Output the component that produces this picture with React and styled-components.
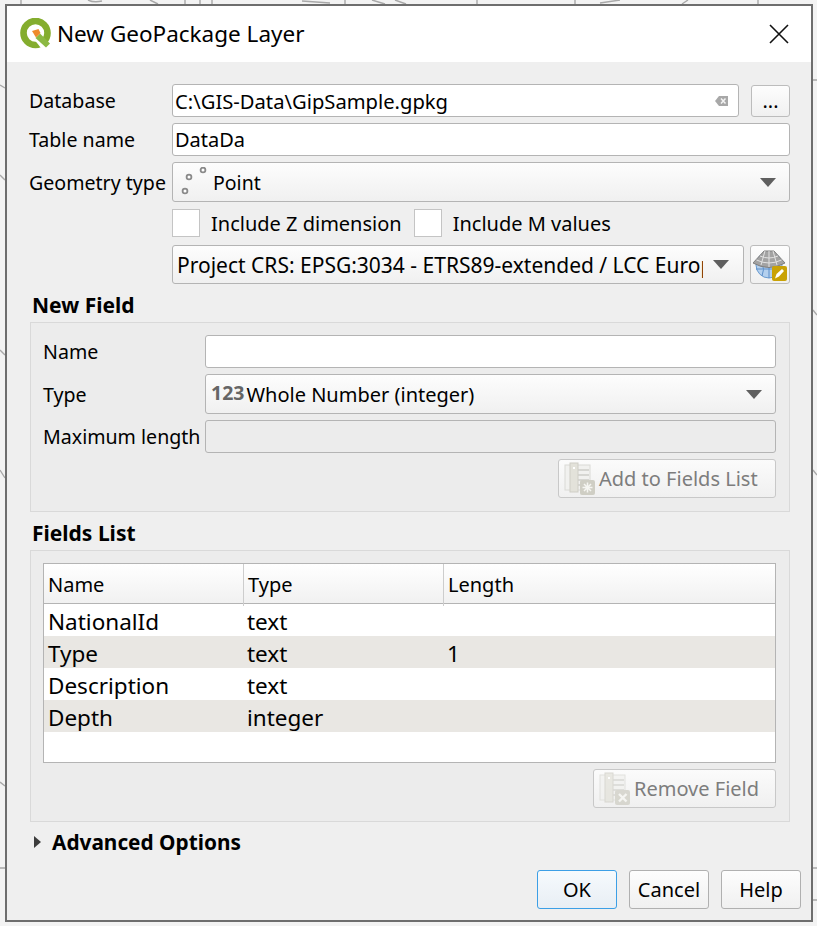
import React from "react";
import styled, { createGlobalStyle } from "styled-components";

const GlobalStyle = createGlobalStyle`
  html, body {
    margin: 0;
    padding: 0;
    background: #f3f3f3;
  }
  body {
    font-family: "Noto Sans", "DejaVu Sans", sans-serif;
    font-size: 20px;
    color: #000;
  }
`;

const Page = styled.div`
  position: relative;
  width: 817px;
  height: 926px;
  overflow: hidden;
  padding: 4px 0 0 5px;
  box-sizing: border-box;
`;

const MapLines = styled.svg`
  position: absolute;
  inset: 0;
`;

const Dialog = styled.div`
  position: relative;
  width: 808px;
  height: 918px;
  box-sizing: border-box;
  border: 2px solid #6e6e6e;
  background: #efefef;
  display: flex;
  flex-direction: column;
`;

const TitleBar = styled.div`
  height: 56px;
  background: #fff;
  display: flex;
  align-items: center;
  padding: 0 21px 0 13px;
  flex-shrink: 0;
`;

const TitleText = styled.div`
  flex: 1;
  margin-left: 5px;
  font-size: 22.5px;
  line-height: 56px;
`;

const Body = styled.div`
  padding: 22px 21px 0 22px;
  display: flex;
  flex-direction: column;
`;

const Row = styled.div`
  display: flex;
  align-items: center;
  margin-top: ${(p) => p.$top || 0}px;
`;

const Label = styled.div`
  width: ${(p) => p.$width || 143}px;
  flex-shrink: 0;
  white-space: nowrap;
  font-size: 19.6px;
`;

const Field = styled.div`
  flex: 1;
  height: ${(p) => p.$height || 33}px;
  box-sizing: border-box;
  border: 1px solid #b4b4b4;
  border-radius: 3px;
  background: ${(p) => (p.$disabled ? "#ececec" : "#fff")};
  display: flex;
  align-items: center;
  padding: 0 2px;
  min-width: 0;
`;

const FieldText = styled.div`
  flex: 1;
  white-space: nowrap;
  overflow: hidden;
  font-size: ${(p) => p.$size || 20}px;
`;

const ComboText = styled(FieldText)`
  margin-left: ${(p) => p.$left || 0}px;
  padding-top: 1px;
`;

const Combo = styled.div`
  flex: 1;
  height: ${(p) => p.$height || 40}px;
  min-width: 0;
  box-sizing: border-box;
  border: 1px solid #b4b4b4;
  border-radius: 3px;
  background: linear-gradient(#fdfdfd, #f0f0f0);
  display: flex;
  align-items: center;
  padding: 0 ${(p) => p.$right || 13}px 0 ${(p) => p.$left || 4}px;
`;

const Arrow = styled.div`
  width: 0;
  height: 0;
  flex-shrink: 0;
  border-left: 8px solid transparent;
  border-right: 8px solid transparent;
  border-top: 9px solid #5f5f5f;
  margin-left: ${(p) => p.$gap || 0}px;
`;

const ToolButton = styled.div`
  width: ${(p) => p.$width}px;
  height: ${(p) => p.$height}px;
  margin-left: ${(p) => p.$gap}px;
  box-sizing: border-box;
  flex-shrink: 0;
  border: 1px solid #bcbcbc;
  border-radius: 3px;
  background: linear-gradient(#fdfdfd, #f0f0f0);
  display: flex;
  align-items: center;
  justify-content: center;
`;

const Check = styled.div`
  width: 28px;
  height: 28px;
  box-sizing: border-box;
  flex-shrink: 0;
  border: 1px solid #c4c4c4;
  background: #fff;
`;

const CheckLabel = styled.div`
  margin: 0 12px 0 11px;
  white-space: nowrap;
`;

const Section = styled.div`
  font-weight: 700;
  font-size: 21px;
  line-height: 28px;
  margin: ${(p) => p.$top}px 0 3px 3px;
`;

const Group = styled.div`
  width: 760px;
  margin-left: 1px;
  height: ${(p) => p.$height}px;
  box-sizing: border-box;
  border: 1px solid #d9d9d9;
  background: #ececec;
  padding: 12px 13px 0 12px;
`;

const ActionRow = styled.div`
  display: flex;
  justify-content: flex-end;
  margin-top: 6px;
`;

const ActionButton = styled.div`
  width: ${(p) => p.$width}px;
  height: 39px;
  box-sizing: border-box;
  border: 1px solid #c8c8c8;
  border-radius: 3px;
  background: linear-gradient(#fbfbfb, #f0f0f0);
  color: #7d7d7d;
  display: flex;
  align-items: center;
  padding-left: 5px;
  gap: 2px;
  white-space: nowrap;
`;

const Table = styled.div`
  height: 200px;
  box-sizing: border-box;
  border: 1px solid #b4b4b4;
  background: #fff;
`;

const Columns = styled.div`
  display: grid;
  grid-template-columns: 199px 200px 1fr;
`;

const HeadRow = styled(Columns)`
  height: 39px;
  border-bottom: 1px solid #b4b4b4;
  background: linear-gradient(#fff, #f1f1f1);
`;

const HeadCell = styled.div`
  line-height: 42px;
  padding-left: 4px;
  border-left: ${(p) => (p.$first ? "none" : "1px solid #cdcdcd")};
`;

const DataRow = styled(Columns)`
  height: 32px;
  background: ${(p) => (p.$alt ? "#e9e7e3" : "#fff")};
`;

const DataCell = styled.div`
  font-size: 22.5px;
  line-height: 36px;
  height: 32px;
  padding-left: 4px;
`;

const Advanced = styled.div`
  display: flex;
  align-items: center;
  font-weight: 700;
  font-size: 20.8px;
  margin: 5px 0 0 5px;
  height: 30px;
`;

const Disclosure = styled.div`
  width: 0;
  height: 0;
  border-top: 6px solid transparent;
  border-bottom: 6px solid transparent;
  border-left: 7px solid #3c3c3c;
  margin-right: 11px;
`;

const Footer = styled.div`
  display: flex;
  justify-content: flex-end;
  gap: 12px;
  margin: 13px -11px 0 0;
`;

const DialogButton = styled.div`
  width: 80px;
  height: 39px;
  box-sizing: border-box;
  border: 1px solid ${(p) => (p.$primary ? "#3c9fe6" : "#b0b0b0")};
  border-radius: 3px;
  background: ${(p) =>
    p.$primary ? "linear-gradient(#f6fafd, #e8eef4)" : "linear-gradient(#fdfdfd, #f0f0f0)"};
  display: flex;
  align-items: center;
  justify-content: center;
`;

const NumberGlyph = styled.span`
  font-weight: 700;
  font-size: 19.5px;
  color: #666;
  margin-right: 2px;
  position: relative;
  top: -2px;
`;

const QgisLogo = () => (
  <svg width="32" height="32" viewBox="0 0 32 32">
    <circle cx="15.5" cy="15" r="12" fill="none" stroke="#84ad2e" strokeWidth="6.6" />
    <path d="M17 17 L24 23 L31 29 L27 32 L21 30 L13 20 Z" fill="#fff" />
    <path d="M15.5 20 L20 15.5 L30 25.5 L26 29.5 Z" fill="#8cb943" />
    <path d="M12 13 L18.5 11 L20.5 15 L16 19.5 Z" fill="#ee8a2c" />
  </svg>
);

const CloseIcon = () => (
  <svg width="22" height="22" viewBox="0 0 22 22">
    <path d="M2 2 L20 20 M20 2 L2 20" stroke="#111" strokeWidth="1.6" />
  </svg>
);

const ClearIcon = () => (
  <svg width="14" height="12" viewBox="0 0 14 12" style={{ marginRight: 7 }}>
    <path d="M4 1 H13 V11 H4 L0 6 Z" fill="#a8a8a8" />
    <path d="M6 3.5 L10.5 8.5 M10.5 3.5 L6 8.5" stroke="#f4f4f4" strokeWidth="1.5" />
  </svg>
);

const PointsIcon = () => (
  <svg width="34" height="30" viewBox="0 0 34 30">
    <g fill="#fff" stroke="#8a8a8a" strokeWidth="1.8">
      <circle cx="12" cy="10" r="2.4" />
      <circle cx="26" cy="3" r="2.4" />
      <circle cx="8" cy="24" r="2.4" />
    </g>
  </svg>
);

const GlobeIcon = () => (
  <svg width="34" height="34" viewBox="0 0 34 34">
    <circle cx="16" cy="17" r="13" fill="#b4d0ee" stroke="#6a9bd0" strokeWidth="1" />
    <path d="M3 21 H29 M16 14 V30 M9 14 Q12 22 9 28 M23 14 Q20 22 23 28" stroke="#5c8ec8" strokeWidth="1" fill="none" />
    <path d="M11 3 H21 L32 15 Q16 24 0 15 Z" fill="#a3a3a3" stroke="#7f7f7f" strokeWidth="1" />
    <path d="M16 3 V19 M7 8 Q16 12 25 8 M3.5 12 Q16 18 28.5 12 M12 3 L8 17 M20 3 L24 17" stroke="#e2e2e2" strokeWidth="1" fill="none" />
    <rect x="19" y="18" width="15" height="15" rx="2" fill="#c9a206" />
    <path d="M22 30.5 L23.5 26 L29 21 L31 23 L26 28.5 Z" fill="#fff" />
  </svg>
);

const FieldsIcon = ({ badge, faint }) => (
  <svg width="33" height="33" viewBox="0 0 33 33" style={{ opacity: faint ? 0.75 : 1 }}>
    <rect x="1" y="3" width="25" height="25" fill="#f1f1ef" stroke="#dadad6" />
    <path d="M9 8 H25 M9 13 H25 M9 18 H25 M9 23 H25" stroke="#d6d6d2" strokeWidth="2" />
    <rect x="6" y="1" width="8" height="29" fill="#e3e2da" stroke="#cfcec6" />
    <rect x="9" y="5" width="2" height="2" fill="#fff" />
    <rect x="16" y="18" width="15" height="15" rx="2" fill="#cfcec4" />
    {badge === "add" ? (
      <path d="M23.5 20.5 V30.5 M18.5 25.5 H28.5 M20 22 L27 29 M27 22 L20 29" stroke="#f6f6f2" strokeWidth="1.5" />
    ) : (
      <path d="M20 22 L27.5 29.5 M27.5 22 L20 29.5" stroke="#f6f6f2" strokeWidth="2.4" />
    )}
  </svg>
);

const fields = [
  { name: "NationalId", type: "text", length: "" },
  { name: "Type", type: "text", length: "1" },
  { name: "Description", type: "text", length: "" },
  { name: "Depth", type: "integer", length: "" },
];

export default function App() {
  return (
    <Page>
      <GlobalStyle />
      <MapLines width="817" height="926">
        <g stroke="#a8a8a8" strokeWidth="1.4" fill="none">
          <path d="M21 0 V4 M88 0 Q94 3 102 1 M150 0 L158 4 M185 0 V4 M200 0 V4 M212 0 V4 M302 1 L330 3 M345 0 V4 M372 0 L385 4 M395 0 L406 4 M477 0 V4 M575 0 V4 M600 3 L620 0 M682 4 L688 0 M758 0 V4" />
          <path d="M0 85 L5 88 M0 175 L5 180 M0 350 L5 355 M0 470 L5 478 M0 782 L5 786 M0 868 H5" />
          <path d="M813 80 H817 M813 310 L817 315 M813 470 L817 475 M813 868 H817 M813 900 H817" />
        </g>
      </MapLines>
      <Dialog>
        <TitleBar>
          <QgisLogo />
          <TitleText>New GeoPackage Layer</TitleText>
          <CloseIcon />
        </TitleBar>
        <Body>
          <Row>
            <Label>Database</Label>
            <Field>
              <FieldText $size={20.2}>C:\GIS-Data\GipSample.gpkg</FieldText>
              <ClearIcon />
            </Field>
            <ToolButton $width={39} $height={32} $gap={12}>...</ToolButton>
          </Row>
          <Row $top={6}>
            <Label>Table name</Label>
            <Field>
              <FieldText>DataDa</FieldText>
            </Field>
          </Row>
          <Row $top={6}>
            <Label>Geometry type</Label>
            <Combo>
              <PointsIcon />
              <ComboText $left={2} $size={19.5}>Point</ComboText>
              <Arrow />
            </Combo>
          </Row>
          <Row $top={7}>
            <Label />
            <Check />
            <CheckLabel>Include Z dimension</CheckLabel>
            <Check />
            <CheckLabel>Include M values</CheckLabel>
          </Row>
          <Row $top={8}>
            <Label />
            <Combo $height={39} $right={14}>
              <ComboText $size={21}>Project CRS: EPSG:3034 - ETRS89-extended / LCC Europe</ComboText>
              <Arrow $gap={10} />
            </Combo>
            <ToolButton $width={40} $height={39} $gap={6}>
              <GlobeIcon />
            </ToolButton>
          </Row>

          <Section $top={7}>New Field</Section>
          <Group $height={190}>
            <Row>
              <Label $width={162}>Name</Label>
              <Field />
            </Row>
            <Row $top={6}>
              <Label $width={162}>Type</Label>
              <Combo $left={5}>
                <NumberGlyph>123</NumberGlyph>
                <ComboText>Whole Number (integer)</ComboText>
                <Arrow />
              </Combo>
            </Row>
            <Row $top={6}>
              <Label $width={162}>Maximum length</Label>
              <Field $disabled />
            </Row>
            <ActionRow>
              <ActionButton $width={218}>
                <FieldsIcon badge="add" />
                Add to Fields List
              </ActionButton>
            </ActionRow>
          </Group>

          <Section $top={7}>Fields List</Section>
          <Group $height={272}>
            <Table>
              <HeadRow>
                <HeadCell $first>Name</HeadCell>
                <HeadCell>Type</HeadCell>
                <HeadCell>Length</HeadCell>
              </HeadRow>
              {fields.map((f, i) => (
                <DataRow key={f.name} $alt={i % 2 === 1}>
                  <DataCell>{f.name}</DataCell>
                  <DataCell>{f.type}</DataCell>
                  <DataCell>{f.length}</DataCell>
                </DataRow>
              ))}
            </Table>
            <ActionRow>
              <ActionButton $width={183}>
                <FieldsIcon badge="remove" faint />
                Remove Field
              </ActionButton>
            </ActionRow>
          </Group>

          <Advanced>
            <Disclosure />
            Advanced Options
          </Advanced>
          <Footer>
            <DialogButton $primary>OK</DialogButton>
            <DialogButton>Cancel</DialogButton>
            <DialogButton>Help</DialogButton>
          </Footer>
        </Body>
      </Dialog>
    </Page>
  );
}
